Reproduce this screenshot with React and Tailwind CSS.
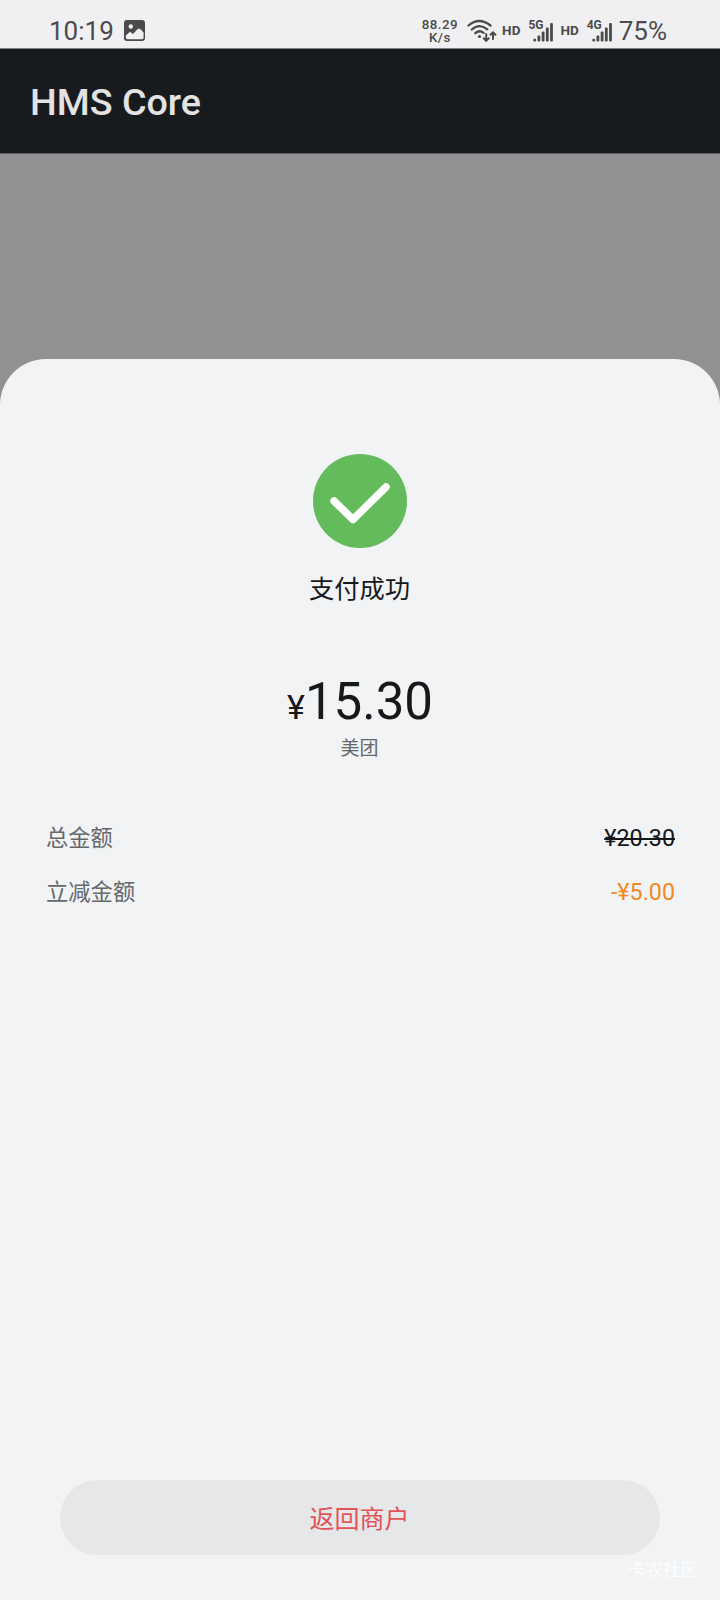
import React from 'react';

const details = [
    { label: '总金额', value: '¥20.30', valueClass: 'text-[#17181a] line-through decoration-[1.5px]' },
    { label: '立减金额', value: '-¥5.00', valueClass: 'text-[#f08a24]' }
];

const PictureIcon = () => (
    <svg className="w-[21px] h-[21px]" viewBox="0 0 21 21">
        <rect width="21" height="21" rx="3" fill="#4b4b4d" />
        <circle cx="6.8" cy="6.5" r="2.2" fill="#f0f0f2" />
        <path d="M1.8 15.5 L6 11.8 L9 14 L14 8.8 L16 8.8 L19.6 12.5 V17.5 Q19.6 19.3 18 19.3 H3.8 Q1.8 19.3 1.8 17.5 Z" fill="#f0f0f2" />
    </svg>
);

const WifiIcon = () => (
    <svg className="w-[30px] h-6" viewBox="0 0 30 24" fill="none" stroke="#4b4b4d" strokeLinecap="round">
        <path d="M1.5 6.5 Q12 -2.5 23.5 6.5" strokeWidth="2.3" />
        <path d="M4.8 10.5 Q12.5 3.8 20.3 10.3" strokeWidth="2.3" />
        <path d="M8.3 14.2 Q12.5 10.6 16.6 13.8" strokeWidth="2.3" />
        <circle cx="12.5" cy="17.5" r="1.6" fill="#4b4b4d" stroke="none" />
        <path d="M19.2 15 V21.5 M16.7 19.3 L19.2 21.8 L21.7 19.3" strokeWidth="2" />
        <path d="M26 20 V13.5 M23.5 15.8 L26 13.3 L28.5 15.8" strokeWidth="2" />
    </svg>
);

const Signal = ({ type }) => (
    <div className="relative w-[25px] h-[22px]">
        <span className="absolute left-0 top-0 text-[12px] leading-[10px] font-bold">{type}</span>
        <svg className="w-[25px] h-[22px]" viewBox="0 0 25 22" fill="#4b4b4d">
            <rect x="5.3" y="18.7" width="2.8" height="2.8" rx="1" />
            <rect x="9.5" y="15.5" width="2.8" height="6" rx="1" />
            <rect x="13.7" y="11.5" width="2.8" height="10" rx="1" />
            <rect x="17.9" y="7.5" width="2.8" height="14" rx="1" />
            <rect x="22.1" y="3" width="2.8" height="18.5" rx="1" />
        </svg>
    </div>
);

const StatusBar = () => (
    <div className="h-[49px] pl-[49px] pr-[53px] pt-[13px] flex items-start justify-between bg-[#f0f0f2] border-b border-[#7f8183] text-[#4b4b4d]">
        <div className="flex items-start">
            <span className="text-[26px] leading-[36px]">10:19</span>
            <div className="mt-[7px] ml-[10px]"><PictureIcon /></div>
        </div>
        <div className="flex items-start">
            <div className="mt-[5px] flex flex-col items-center text-[13.3px] leading-[13px] font-medium tracking-[0.5px]">
                <span>88.29</span>
                <span>K/s</span>
            </div>
            <div className="ml-[9px] mt-[6px]"><WifiIcon /></div>
            <span className="ml-[5px] mt-[10px] text-[13.5px] leading-[15px] font-bold">HD</span>
            <div className="ml-[8px] mt-[7px]"><Signal type="5G" /></div>
            <span className="ml-[7px] mt-[10px] text-[13.5px] leading-[15px] font-bold">HD</span>
            <div className="ml-[8px] mt-[7px]"><Signal type="4G" /></div>
            <span className="ml-[7px] text-[26px] leading-[36px]">75%</span>
        </div>
    </div>
);

const App = () => {
    return (
        <div className="relative w-[720px] h-[1600px] flex flex-col overflow-hidden bg-[#919193] font-['Roboto','Noto_Sans_CJK_SC',sans-serif]">
            <StatusBar />

            <header className="h-[105px] pl-[30px] pt-px flex items-center bg-[#181b1e] text-[#e3e3e4] border-b border-[#5a5b5d]">
                <h1 className="text-[37.7px] leading-[44px] font-medium">HMS Core</h1>
            </header>

            <main className="mt-[205px] flex-1 flex flex-col items-center rounded-t-[46px] bg-[#f1f3f5]">
                <svg className="mt-[95px] w-[94px] h-[94px] mr-px" viewBox="0 0 94 94">
                    <circle cx="47" cy="47" r="47" fill="#63bb5c" />
                    <path d="M21 47 L40 65.5 L73 33" fill="none" stroke="#fff" strokeWidth="7.5" strokeLinecap="round" strokeLinejoin="round" />
                </svg>
                <p className="mt-[24px] mr-px text-[25.3px] leading-[36px] text-[#17181a]">支付成功</p>

                <div className="mt-[64px] flex items-baseline text-[#17181a] leading-[60px]">
                    <span className="text-[34px]">¥</span>
                    <span className="text-[51px]">15.30</span>
                </div>
                <p className="-mt-[2px] mr-px text-[19px] leading-[28px] text-[#66686a]">美团</p>

                <div className="mt-[57px] w-full pl-[46px] pr-[45px] flex flex-col gap-[18px]">
                    {details.map((item) => (
                        <div key={item.label} className="flex items-center justify-between h-9">
                            <span className="pt-[2px] text-[22.3px] text-[#66686a]">{item.label}</span>
                            <span className={`text-[23.3px] ${item.valueClass}`}>{item.value}</span>
                        </div>
                    ))}
                </div>

                <button className="mt-auto mb-[45px] pt-[4px] pr-px w-[600px] h-[75px] rounded-full bg-[#e6e7e9] text-[25px] text-[#e35257]">
                    返回商户
                </button>
            </main>

            <span className="absolute right-[22px] bottom-[17px] text-[17.5px] leading-[26px] text-white/80">卡农社区</span>
        </div>
    );
};

export default App;
